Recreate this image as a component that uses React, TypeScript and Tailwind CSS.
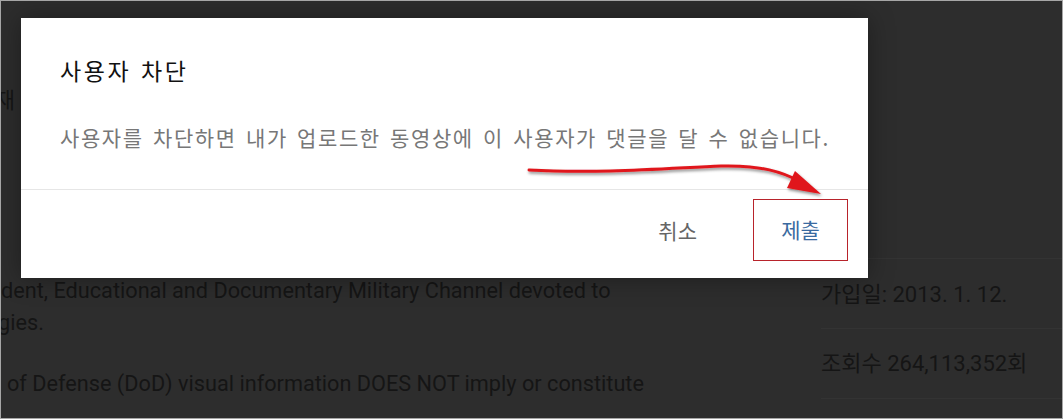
export default function App() {
  return (
    <div className="relative w-[1063px] h-[419px] overflow-hidden border border-[#a6a6a6] bg-[#2d2d2d] font-['Roboto','Noto_Sans_CJK_KR',sans-serif]">
      {/* page behind the overlay */}
      <div className="flex h-full">
        <div className="flex-1 flex flex-col text-[21.7px] text-[#151515]">
          <div className="mt-[80px] ml-[-6px] h-[40px] leading-[40px]">재</div>
          <div className="mt-[154px] leading-[32px]">
            <p>dent, Educational and Documentary Military Channel devoted to</p>
            <p className="ml-[-3px]">gies.</p>
            <p className="mt-[29px] ml-[6px]">of Defense (DoD) visual information DOES NOT imply or constitute</p>
          </div>
        </div>
        <div className="w-[241px] flex flex-col pt-[257px] text-[22px] text-[#151515]">
          <div className="h-[70px] pt-[2px] border-t border-[#333333] flex items-center">가입일: 2013. 1. 12.</div>
          <div className="h-[70px] border-t border-[#333333] flex items-center">조회수 264,113,352회</div>
          <div className="border-t border-[#333333]" />
        </div>
      </div>

      {/* dialog */}
      <div className="absolute left-[20px] top-[17px] w-[847px] h-[260px] bg-white flex flex-col shadow-[0_0_24px_rgba(0,0,0,0.35)] font-['Noto_Sans_CJK_KR',sans-serif]">
        <div className="h-[172px] px-[39px] pt-[32px] border-b border-[#e6e6e6]">
          <h2 className="text-[23px] leading-[40px] text-[#111111] tracking-[2.6px] [word-spacing:2px]">사용자 차단</h2>
          <p className="mt-[31px] text-[21px] leading-[32px] text-[#777777] tracking-[1.6px] [word-spacing:3px] whitespace-nowrap">
            사용자를 차단하면 내가 업로드한 동영상에 이 사용자가 댓글을 달 수 없습니다.
          </p>
        </div>
        <div className="flex-1 flex items-end justify-end gap-[56px] pr-[20px] pb-[17px]">
          <button className="h-[61px] text-[21px] text-[#666666]">취소</button>
          <button className="w-[95px] h-[62px] border border-[#b8232b] text-[21px] text-[#3a6aa0]">제출</button>
        </div>
      </div>

      {/* annotation arrow */}
      <svg className="absolute left-[520px] top-[155px]" width="310" height="50" viewBox="0 0 310 50">
        <defs>
          <filter id="sh" x="-10%" y="-50%" width="120%" height="200%">
            <feDropShadow dx="1" dy="2" stdDeviation="1.5" floodColor="#000" floodOpacity="0.45" />
          </filter>
        </defs>
        <g filter="url(#sh)">
          <path d="M8 14 C 80 18, 150 12, 200 10 C 240 9, 262 16, 280 26" fill="none" stroke="#e0161b" strokeWidth="3" strokeLinecap="round" />
          <path d="M274 15 L 300 38 L 266 32 Z" fill="#e0161b" />
        </g>
      </svg>
    </div>
  )
}
